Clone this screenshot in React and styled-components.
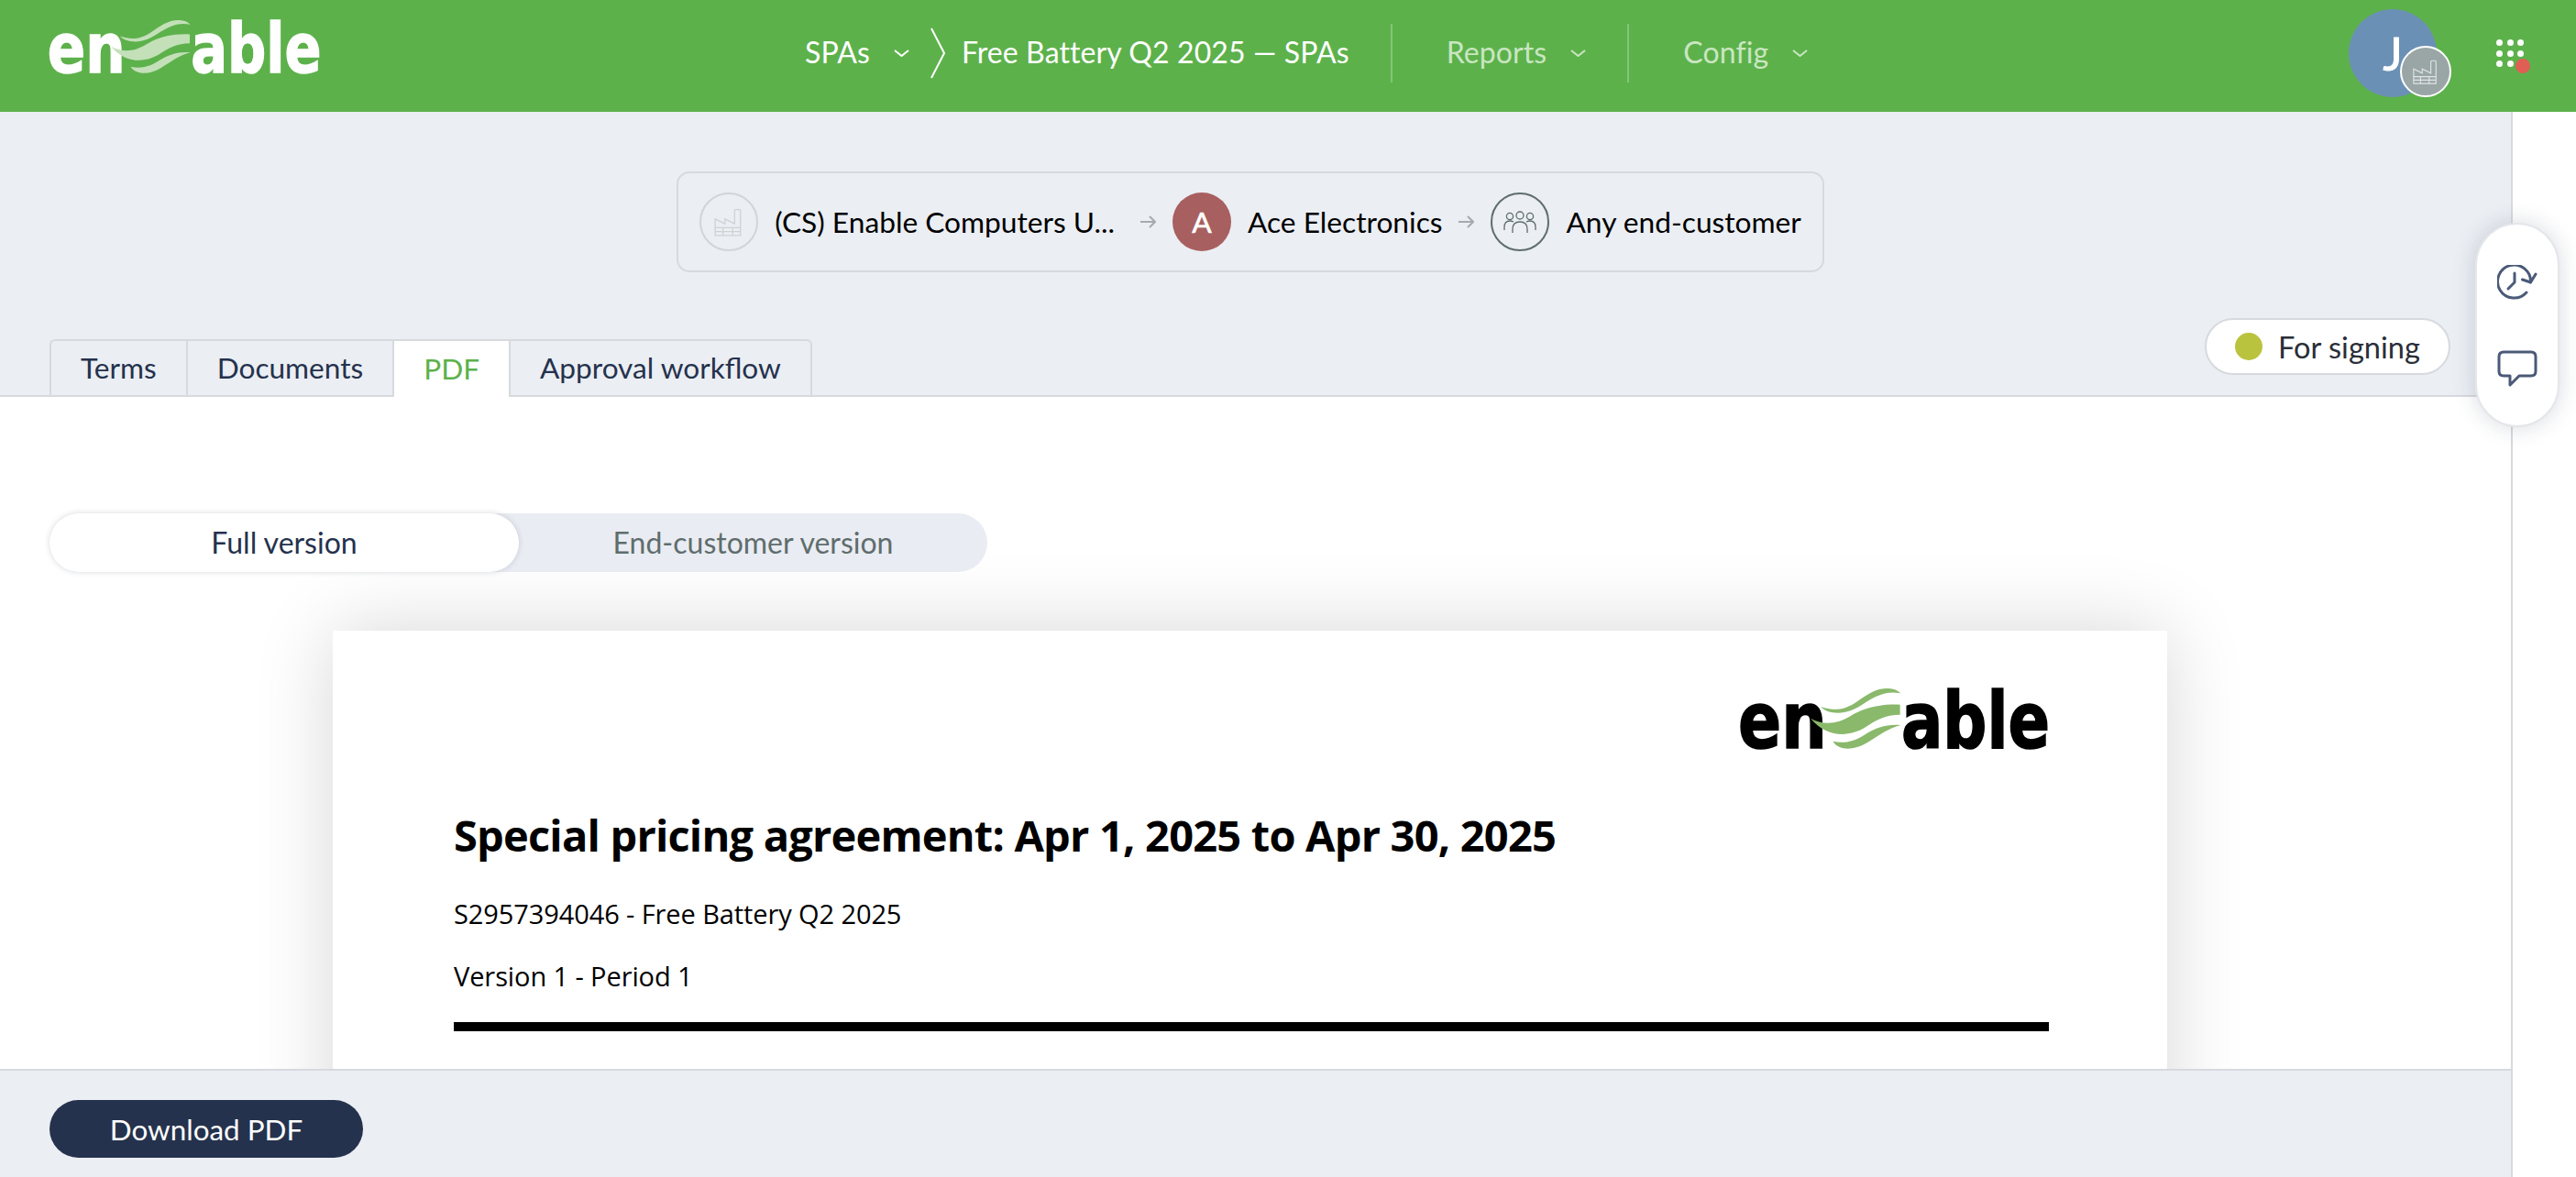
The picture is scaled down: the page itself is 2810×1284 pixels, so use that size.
import React from "react";
import styled, { createGlobalStyle } from "styled-components";

const GlobalStyle = createGlobalStyle`
  html, body {
    margin: 0;
    padding: 0;
    background: #fff;
  }
  * {
    box-sizing: border-box;
  }
`;

const Page = styled.div`
  position: relative;
  width: 2810px;
  height: 1284px;
  display: flex;
  flex-direction: column;
  overflow: hidden;
  font-family: "Lato", "Liberation Sans", sans-serif;
  font-size: 32px;
  color: #25324d;
`;

/* header */
const Header = styled.header`
  height: 122px;
  flex: none;
  display: flex;
  align-items: center;
  padding: 0 57px 6px 54px;
  background: #5db14b;
`;

const LogoSlot = styled.div`
  display: flex;
  margin-bottom: 14px;
`;

const Nav = styled.nav`
  display: flex;
  align-items: center;
  height: 64px;
  margin-left: 528px;
  letter-spacing: 0.1px;
`;

const NavLabel = styled.span`
  margin-bottom: 3px;
  color: ${(p) => (p.$dim ? "#c9e6c1" : "#fff")};
  white-space: nowrap;
`;

const NavChevron = styled.svg`
  width: 17px;
  height: 8px;
  margin-left: 26px;
  fill: none;
  stroke: ${(p) => (p.$dim ? "#c9e6c1" : "#fff")};
  stroke-width: 2;
`;

const Crumb = styled.svg`
  width: 16px;
  height: 56px;
  margin: 0 18px 0 23px;
  fill: none;
  stroke: #fff;
  stroke-width: 2;
`;

const NavDivider = styled.div`
  width: 2px;
  height: 64px;
  margin: 0 ${(p) => p.$right}px 0 ${(p) => p.$left}px;
  background: rgba(255, 255, 255, 0.25);
`;

const UserArea = styled.div`
  margin-left: auto;
  display: flex;
  align-items: center;
  gap: 65px;
`;

const Avatar = styled.div`
  position: relative;
  width: 96px;
  height: 96px;
  border-radius: 50%;
  display: flex;
  align-items: center;
  justify-content: center;
  background: #6b90b5;
  color: #fff;
  font-size: 50px;
  -webkit-text-stroke: 1px #fff;
`;

const AvatarBadge = styled.div`
  position: absolute;
  right: -16px;
  bottom: 0;
  width: 56px;
  height: 56px;
  border-radius: 50%;
  border: 2px solid #fff;
  display: flex;
  align-items: center;
  justify-content: center;
  background: #9aa6a6;
`;

const AppsGrid = styled.div`
  position: relative;
  display: grid;
  grid-template-columns: repeat(3, 7px);
  gap: 4.5px;
`;

const AppsDot = styled.i`
  display: block;
  width: 7px;
  height: 7px;
  border-radius: 50%;
  background: #fff;
`;

const AppsAlert = styled.i`
  position: absolute;
  right: -7px;
  bottom: -7px;
  width: 16px;
  height: 16px;
  border-radius: 50%;
  background: #e05f55;
`;

/* body */
const Body = styled.div`
  flex: 1;
  min-height: 0;
  display: flex;
`;

const Main = styled.main`
  width: 2739px;
  flex: none;
  display: flex;
  flex-direction: column;
  background: #ebeef3;
`;

const SideStrip = styled.aside`
  flex: 1;
  background: #fff;
  border-left: 2px solid #d6dade;
`;

const ContextRow = styled.div`
  display: flex;
  justify-content: center;
  padding: 65px 11px 0 0;
`;

const ContextBar = styled.div`
  height: 110px;
  display: flex;
  align-items: center;
  padding: 0 23px;
  border: 2px solid #d6dade;
  border-radius: 14px;
  color: #000;
  font-size: 31.7px;
`;

const Party = styled.span`
  white-space: nowrap;
  margin-left: 18px;
`;

const PartyCircle = styled.div`
  width: 64px;
  height: 64px;
  flex: none;
  border-radius: 50%;
  display: flex;
  align-items: center;
  justify-content: center;
  border: ${(p) => (p.$line ? `2px solid ${p.$line}` : "none")};
  background: ${(p) => p.$fill || "transparent"};
  color: #fff;
  -webkit-text-stroke: 0.6px #fff;
`;

const PartyArrow = styled.svg`
  width: 17px;
  height: 14px;
  margin: 0 18px 0 ${(p) => p.$left}px;
  fill: none;
  stroke: #a4abae;
  stroke-width: 2;
`;

const TabRow = styled.div`
  height: 86px;
  margin-top: 50px;
  display: flex;
  align-items: flex-end;
  justify-content: space-between;
  padding: 0 66px 0 54px;
  border-bottom: 2px solid #d6dade;
`;

const Tabs = styled.div`
  display: flex;
  margin-bottom: -2px;
  font-size: 31.6px;
`;

const Tab = styled.div`
  height: 63px;
  padding: 0 32px 2px;
  display: flex;
  align-items: center;
  border: solid #d6dade;
  border-width: 2px 0 ${(p) => (p.$active ? "0" : "2px")} 2px;
  border-top-left-radius: ${(p) => (p.$first ? "6px" : "0")};
  border-top-right-radius: ${(p) => (p.$last ? "6px" : "0")};
  border-right-width: ${(p) => (p.$last ? "2px" : "0")};
  background: ${(p) => (p.$active ? "#fff" : "#ebeef3")};
  color: ${(p) => (p.$active ? "#5db14b" : "#25324d")};
`;

const StatusPill = styled.div`
  width: 268px;
  height: 62px;
  margin-bottom: 22px;
  padding-left: 31px;
  display: flex;
  align-items: center;
  gap: 17px;
  border: 2px solid #d6dade;
  border-radius: 31px;
  background: #fff;
  color: #2a2f38;
  font-size: 32.6px;
`;

const StatusDot = styled.i`
  width: 30px;
  height: 30px;
  border-radius: 50%;
  background: #bac33e;
`;

const Content = styled.section`
  flex: 1;
  min-height: 0;
  overflow: hidden;
  padding: 127px 0 0 54px;
  background: #fff;
`;

const VersionToggle = styled.div`
  position: relative;
  z-index: 1;
  width: 1023px;
  height: 64px;
  display: flex;
  border-radius: 32px;
  background: #e9ecf2;
`;

const VersionOption = styled.div`
  width: ${(p) => (p.$active ? "512px" : "511px")};
  display: flex;
  align-items: center;
  justify-content: center;
  padding-bottom: 2px;
  border-radius: 32px;
  background: ${(p) => (p.$active ? "#fff" : "transparent")};
  box-shadow: ${(p) => (p.$active ? "0 0 6px rgba(37, 50, 77, 0.18)" : "none")};
  color: ${(p) => (p.$active ? "#25324d" : "#5f6d6d")};
`;

const Paper = styled.article`
  width: 2001px;
  height: 600px;
  margin: 64px 0 0 309px;
  padding: 63px 129px 0 132px;
  background: #fff;
  box-shadow: 0 0 80px rgba(0, 0, 0, 0.16);
  color: #000;
  font-family: "Open Sans", "Noto Sans", sans-serif;
`;

const PaperLogoRow = styled.div`
  display: flex;
  justify-content: flex-end;
`;

const PaperTitle = styled.h1`
  margin: 62px 0 0;
  font-size: 47px;
  line-height: 64px;
  font-weight: 700;
  letter-spacing: -0.8px;
`;

const PaperLine = styled.p`
  margin: ${(p) => p.$top}px 0 0;
  font-size: 29px;
  line-height: 40px;
  font-weight: 500;
  letter-spacing: -0.1px;
`;

const PaperRule = styled.div`
  height: 10px;
  margin-top: 30px;
  background: #000;
`;

const Footer = styled.footer`
  height: 118px;
  flex: none;
  padding-top: 32px;
  padding-left: 54px;
  border-top: 2px solid #d6dade;
  background: #ebeef3;
`;

const DownloadButton = styled.button`
  width: 342px;
  height: 63px;
  border: 0;
  border-radius: 32px;
  background: #25324d;
  color: #fff;
  font: inherit;
  font-size: 31.4px;
`;

/* floating actions */
const FloatPill = styled.div`
  position: absolute;
  left: 2700px;
  top: 243px;
  width: 92px;
  height: 223px;
  display: flex;
  flex-direction: column;
  align-items: center;
  gap: 53px;
  padding-top: 44px;
  border: 2px solid #e4e6ea;
  border-radius: 46px;
  background: #fff;
  box-shadow: 0 0 24px rgba(37, 50, 77, 0.18);
`;

const FloatIcon = styled.svg`
  fill: none;
  stroke: #4a5a78;
  stroke-width: 3;
  stroke-linecap: round;
  stroke-linejoin: round;
`;

const FactoryIcon = ({ size, color }) => (
  <svg width={size} height={size} viewBox="0 0 32 32" fill="none" stroke={color} strokeWidth="1.2">
    <path d="M2 30V13l10 5v-5l10 5V4.500q0-1 1-1h4q1 0 1 1V30z" />
    <path d="M2 22h26M2 26h26M10 22v8M20 22v8" />
  </svg>
);

const PeopleIcon = () => (
  <svg width="36" height="26" viewBox="0 0 36 26" fill="none" stroke="#5f6d6d" strokeWidth="1.3">
    <circle cx="18" cy="6" r="4" />
    <circle cx="7" cy="7" r="3.600" />
    <circle cx="29" cy="7" r="3.600" />
    <path d="M10 25v-4q0-8 8-8t8 8v4" />
    <path d="M1 22v-3q0-7 6-7 2 0 4 1M35 22v-3q0-7-6-7-2 0-4 1" />
  </svg>
);

const Logo = ({ width, height, ink, wave }) => (
  <svg width={width} height={height} viewBox="118 92 1006 198" overflow="visible">
    <g
      fill={ink}
      stroke={ink}
      strokeWidth="5"
      fontFamily="'DejaVu Sans', sans-serif"
      fontWeight="700"
      fontSize="258"
    >
      <text x="108" y="288" textLength="290" lengthAdjust="spacingAndGlyphs">en</text>
      <text x="642" y="288" textLength="486" lengthAdjust="spacingAndGlyphs">able</text>
    </g>
    <g fill={wave}>
      <path d="M378 152C420 165 450 165 490 140C530 112 560 90 600 92C618 93 630 98 640 108C600 100 570 110 530 135C490 162 465 172 435 172C410 172 390 165 378 152Z" />
      <path d="M345 190C385 212 430 212 480 180C530 150 590 142 638 145V178C590 178 560 195 520 222C470 250 400 255 345 190Z" />
      <path d="M418 265C450 272 480 270 520 245C560 218 600 208 640 212C600 222 570 245 530 270C495 292 440 300 418 265Z" />
    </g>
  </svg>
);

const Chevron = ({ dim }) => (
  <NavChevron $dim={dim} viewBox="0 0 17 8">
    <polyline points="1,1 8.5,7 16,1" />
  </NavChevron>
);

const Arrow = ({ left }) => (
  <PartyArrow $left={left} viewBox="0 0 17 14">
    <path d="M0 7h16M10 1l6 6-6 6" />
  </PartyArrow>
);

const tabs = ["Terms", "Documents", "PDF", "Approval workflow"];

const App = () => (
  <Page>
    <GlobalStyle />
    <Header>
      <LogoSlot>
        <Logo width={296} height={58} ink="#fff" wave="#c3e0b9" />
      </LogoSlot>
      <Nav>
        <NavLabel>SPAs</NavLabel>
        <Chevron />
        <Crumb viewBox="0 0 16 56">
          <polyline points="1,1 15,28 1,55" />
        </Crumb>
        <NavLabel>Free Battery Q2 2025 — SPAs</NavLabel>
        <NavDivider $left={45} $right={59} />
        <NavLabel $dim>Reports</NavLabel>
        <Chevron dim />
        <NavDivider $left={45} $right={59} />
        <NavLabel $dim>Config</NavLabel>
        <Chevron dim />
      </Nav>
      <UserArea>
        <Avatar>
          J
          <AvatarBadge>
            <FactoryIcon size={30} color="#dfe4e4" />
          </AvatarBadge>
        </Avatar>
        <AppsGrid>
          {Array.from({ length: 9 }, (_, i) => (
            <AppsDot key={i} />
          ))}
          <AppsAlert />
        </AppsGrid>
      </UserArea>
    </Header>
    <Body>
      <Main>
        <ContextRow>
          <ContextBar>
            <PartyCircle $line="#d0d5d6">
              <FactoryIcon size={34} color="#cdd3d3" />
            </PartyCircle>
            <Party>(CS) Enable Computers U...</Party>
            <Arrow left={28} />
            <PartyCircle $fill="#a85f5f">A</PartyCircle>
            <Party>Ace Electronics</Party>
            <Arrow left={18} />
            <PartyCircle $line="#5f6d6d">
              <PeopleIcon />
            </PartyCircle>
            <Party>Any end-customer</Party>
          </ContextBar>
        </ContextRow>
        <TabRow>
          <Tabs>
            {tabs.map((t, i) => (
              <Tab key={t} $first={i === 0} $last={i === tabs.length - 1} $active={t === "PDF"}>
                {t}
              </Tab>
            ))}
          </Tabs>
          <StatusPill>
            <StatusDot />
            For signing
          </StatusPill>
        </TabRow>
        <Content>
          <VersionToggle>
            <VersionOption $active>Full version</VersionOption>
            <VersionOption>End-customer version</VersionOption>
          </VersionToggle>
          <Paper>
            <PaperLogoRow>
              <Logo width={336} height={66} ink="#000" wave="#8ab96b" />
            </PaperLogoRow>
            <PaperTitle>Special pricing agreement: Apr 1, 2025 to Apr 30, 2025</PaperTitle>
            <PaperLine $top={34}>S2957394046 - Free Battery Q2 2025</PaperLine>
            <PaperLine $top={28}>Version 1 - Period 1</PaperLine>
            <PaperRule />
          </Paper>
        </Content>
        <Footer>
          <DownloadButton>Download PDF</DownloadButton>
        </Footer>
      </Main>
      <SideStrip />
    </Body>
    <FloatPill>
      <FloatIcon width="44" height="40" viewBox="0 0 44 40">
        <path d="M32 30A18 18 0 1 1 36.500 19" />
        <path d="M27.500 16l9 3 5.500-9" />
        <path d="M19 9v10l-7 7" />
      </FloatIcon>
      <FloatIcon width="44" height="41" viewBox="0 0 44 41">
        <path d="M7 2h30q5 0 5 5v16q0 5-5 5H24l-10 10V28H7q-5 0-5-5V7q0-5 5-5z" />
      </FloatIcon>
    </FloatPill>
  </Page>
);

export default App;
